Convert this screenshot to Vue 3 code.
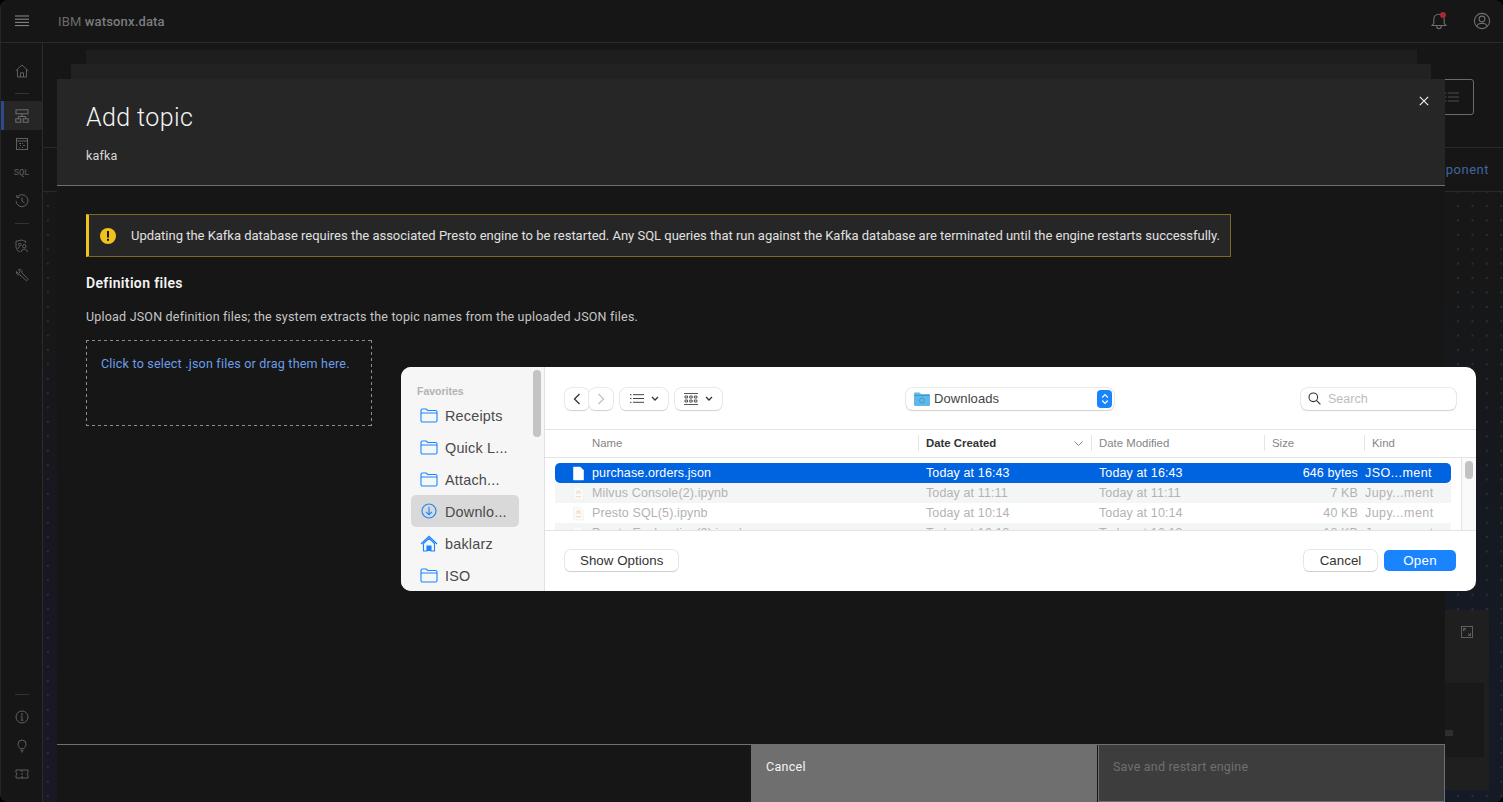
<script setup>
const favorites = [
  { label: 'Receipts', icon: 'folder' },
  { label: 'Quick L...', icon: 'folder' },
  { label: 'Attach...', icon: 'folder' },
  { label: 'Downlo...', icon: 'download', active: true },
  { label: 'baklarz', icon: 'home' },
  { label: 'ISO', icon: 'folder' }
]
const rows = [
  { name: 'purchase.orders.json', created: 'Today at 16:43', modified: 'Today at 16:43', size: '646 bytes', kind: 'JSO...ment', cls: 'selected' },
  { name: 'Milvus Console(2).ipynb', created: 'Today at 11:11', modified: 'Today at 11:11', size: '7 KB', kind: 'Jupy...ment', cls: 'striped' },
  { name: 'Presto SQL(5).ipynb', created: 'Today at 10:14', modified: 'Today at 10:14', size: '40 KB', kind: 'Jupy...ment', cls: '' },
  { name: 'Presto Exploration(2).ipynb', created: 'Today at 10:13', modified: 'Today at 10:13', size: '18 KB', kind: 'Jupy...ment', cls: 'striped' }
]
</script>

<template>
  <div class="app">
    <header class="topbar">
      <svg class="burger" width="14" height="12" viewBox="0 0 14 12"><path d="M0 1h14M0 4.200h14M0 7.400h14M0 10.600h14" stroke="#8d8d8d" fill="none" /></svg>
      <span class="brand">IBM <b>watsonx.data</b></span>
      <span class="spacer"></span>
      <span class="bell">
        <svg width="20" height="20" viewBox="0 0 20 20" fill="none" stroke="#6f6f6f" stroke-width="1.100"><path d="M3 14.500l1.800-2V8.400C4.800 5.400 7 3.200 10 3.200s5.200 2.200 5.200 5.200v4.100l1.800 2z" /><path d="M7.800 14.500v1c0 1.200 1 2.100 2.200 2.100s2.200-.9 2.200-2.100v-1" /></svg>
        <i></i>
      </span>
      <svg class="user" width="18" height="18" viewBox="0 0 18 18" fill="none" stroke="#6f6f6f" stroke-width="1.100"><circle cx="9" cy="9" r="7.600" /><circle cx="9" cy="7" r="2.900" /><path d="M4 14.200c.6-1.800 2-2.700 3.400-2.700h3.200c1.400 0 2.800.9 3.400 2.700" /></svg>
    </header>

    <div class="shell">
      <nav class="sidenav">
        <div class="navitem">
          <svg width="14" height="14" viewBox="0 0 14 14" fill="none" stroke="#5f5f5f"><path d="M.8 6.800L7 1l6.200 5.800M2.500 5.500v7.500h9V5.500M5.500 13V8.800h3V13" /></svg>
        </div>
        <div class="rule"></div>
        <div class="navitem current">
          <svg width="14" height="14" viewBox="0 0 14 14" fill="none" stroke="#6f6f6f"><rect x="1" y=".8" width="12" height="4" /><rect x=".8" y="9.800" width="5" height="3.400" /><rect x="8.200" y="9.800" width="5" height="3.400" /><path d="M7 4.800v2.700M3.300 9.800V7.500h7.400v2.300" /></svg>
        </div>
        <div class="navitem tight">
          <svg width="14" height="14" viewBox="0 0 14 14" fill="none" stroke="#5f5f5f"><rect x="1.500" y="1.500" width="11" height="11" /><path d="M1.500 4h11M4 6.500h2M7 6.500h1M5 8.500h1M8 8.500h2M4 10.500h1M7 10.500h1" /></svg>
        </div>
        <div class="navitem sql">SQL</div>
        <div class="navitem tight">
          <svg width="14" height="14" viewBox="0 0 14 14" fill="none" stroke="#5f5f5f"><path d="M2.100 3.200A6 6 0 1 1 1 7M1.800 1v2.500h2.600M7 3.500V7l2.500 2" /></svg>
        </div>
        <div class="rule second"></div>
        <div class="navitem">
          <svg width="14" height="14" viewBox="0 0 14 14" fill="none" stroke="#5f5f5f"><path d="M5 13C2.500 12 1 10 1 7.500V2.200C3 2 5 1.500 6.500 1c1.200.5 2.500.9 4 1.100v2" /><circle cx="4.800" cy="5.600" r="1.300" /><path d="M3 10c0-1.300.8-2 1.800-2" /><circle cx="9.300" cy="7.200" r="1.700" /><path d="M6.300 13c0-1.800 1.200-2.800 3-2.800s3 1 3 2.800" /></svg>
        </div>
        <div class="navitem">
          <svg width="14" height="14" viewBox="0 0 14 14" fill="none" stroke="#5f5f5f"><path d="M1.500 3.500L3.500 5.500 5.300 4 3.400 1.700C5 .8 6.700 1.600 7 3.300c.1.700 0 1.200-.1 1.500l5.500 5.500c.6.600.6 1.300.1 1.800-.6.600-1.300.5-1.800 0L5 6.800c-2 .7-4.200-1.200-3.500-3.300z" /></svg>
        </div>
        <span class="spacer"></span>
        <div class="rule bottom"></div>
        <div class="navitem">
          <svg width="14" height="14" viewBox="0 0 14 14" fill="none" stroke="#5f5f5f"><circle cx="7" cy="7" r="6" /><path d="M5.500 10.200h3M7 10V6.300H5.800" /><circle cx="7" cy="4.200" r=".5" fill="#5f5f5f" /></svg>
        </div>
        <div class="navitem">
          <svg width="14" height="14" viewBox="0 0 14 14" fill="none" stroke="#5f5f5f"><path d="M5.200 9.700C4.800 8.500 3 7.600 3 5a4 4 0 0 1 8 0c0 2.600-1.800 3.500-2.200 4.700zM5.500 11.200h3M6 12.800h2" /></svg>
        </div>
        <div class="navitem tight">
          <svg width="14" height="14" viewBox="0 0 14 14" fill="none" stroke="#5f5f5f"><path d="M1 3h12v2.400c-1 .3-1 2.900 0 3.200V11H1V8.600c1-.3 1-2.900 0-3.200zM7 3v2M7 6v2M7 9v2" /></svg>
        </div>
      </nav>

      <main class="stage">
        <div class="pagehead">
          <div class="ghostbtn">
            <svg width="14" height="10" viewBox="0 0 14 10" fill="none" stroke="#4c4c4c"><path d="M0 1h1.500M3 1h11M0 5h1.500M3 5h11M0 9h1.500M3 9h11" /></svg>
          </div>
        </div>
        <div class="tabs"><span class="addlink">Add component</span></div>
        <div class="lowercard">
          <svg class="expand" width="12" height="12" viewBox="0 0 12 12" fill="none" stroke="#5f5f5f"><rect x=".5" y=".5" width="11" height="11" /><path d="M2.500 5V2.500H5M9.500 7v2.500H7M2.700 2.700l2 2M9.300 9.300l-2-2" /></svg>
          <div class="innercard"><i></i></div>
        </div>

        <div class="layer one"></div>
        <div class="layer two"></div>
        <section class="modal">
          <div class="modalhead">
            <h1>Add topic</h1>
            <p>kafka</p>
            <svg class="close" width="10" height="10" viewBox="0 0 10 10" stroke="#f4f4f4" stroke-width="1.100"><path d="M.8.800l8.400 8.400M9.200.800L.8 9.200" /></svg>
          </div>
          <div class="modalbody">
            <div class="notice">
              <svg width="18" height="18" viewBox="0 0 18 18"><circle cx="9" cy="9" r="8" fill="#f1c21b" /><rect x="8" y="4" width="2" height="6.500" fill="#161616" /><rect x="8" y="11.800" width="2" height="2" fill="#161616" /></svg>
              <span>Updating the Kafka database requires the associated Presto engine to be restarted. Any SQL queries that run against the Kafka database are terminated until the engine restarts successfully.</span>
            </div>
            <h2>Definition files</h2>
            <p class="hint">Upload JSON definition files; the system extracts the topic names from the uploaded JSON files.</p>
            <div class="drop">Click to select .json files or drag them here.</div>
          </div>
          <footer class="modalfoot">
            <span class="spacer"></span>
            <div class="fbtn cancel">Cancel</div>
            <div class="fbtn save">Save and restart engine</div>
          </footer>
        </section>
      </main>
    </div>

    <div class="dialog">
      <aside class="favs">
        <div class="favtitle">Favorites</div>
        <div v-for="f in favorites" :key="f.label" class="fav" :class="{ active: f.active }">
          <svg v-if="f.icon === 'folder'" width="18" height="15" viewBox="0 0 18 15" fill="none" stroke="#1a84ff" stroke-width="1.100"><path d="M1 3V2.500C1 1.700 1.600 1 2.500 1h3.700l1.400 1.500h8c.8 0 1.400.6 1.400 1.400v8.600c0 .8-.6 1.500-1.400 1.500h-13C1.600 14 1 13.300 1 12.500zM1 5h16" /></svg>
          <svg v-else-if="f.icon === 'download'" width="18" height="18" viewBox="0 0 18 18" fill="none" stroke="#1a84ff" stroke-width="1.100"><circle cx="9" cy="9" r="7" /><path d="M9 4.800v7.800M6 9.800l3 3 3-3" /></svg>
          <svg v-else width="18" height="17" viewBox="0 0 18 17"><path d="M1 9L9 1.500 17 9" fill="none" stroke="#1a84ff" stroke-width="1.300" /><path d="M3.500 8.500L9 3.400l5.500 5.100V16H11v-5H7v5H3.500z" fill="none" stroke="#1a84ff" stroke-width="1.100" /><rect x="7" y="11" width="4" height="5" fill="#1a84ff" /></svg>
          <span>{{ f.label }}</span>
        </div>
        <div class="favscroll"></div>
      </aside>
      <div class="browser">
        <div class="toolbar">
          <div class="navpair">
            <span class="tbtn">
              <svg width="8" height="12" viewBox="0 0 8 12" fill="none" stroke="#333" stroke-width="1.300"><path d="M6.500 1L1.500 6l5 5" /></svg>
            </span>
            <span class="tbtn">
              <svg width="8" height="12" viewBox="0 0 8 12" fill="none" stroke="#c2c2c2" stroke-width="1.300"><path d="M1.500 1l5 5-5 5" /></svg>
            </span>
          </div>
          <span class="tbtn view list">
            <svg width="14" height="9" viewBox="0 0 14 9" fill="none" stroke="#444"><path d="M0 .7h1.500M3 .7h11M0 4.500h1.500M3 4.500h11M0 8.300h1.500M3 8.300h11" /></svg>
            <svg width="8" height="5" viewBox="0 0 8 5" fill="none" stroke="#333" stroke-width="1.300"><path d="M1 1l3 3 3-3" /></svg>
          </span>
          <span class="tbtn view grid">
            <svg width="14" height="12" viewBox="0 0 14 12" fill="none" stroke="#444" stroke-width=".9"><path d="M0 .5h14M0 11.500h14" /><path d="M1 3h2.500v2H1zM5.700 3h2.500v2H5.700zM10.400 3h2.500v2h-2.500zM1 7h2.500v2H1zM5.700 7h2.500v2H5.700zM10.400 7h2.500v2h-2.500z" /></svg>
            <svg width="8" height="5" viewBox="0 0 8 5" fill="none" stroke="#333" stroke-width="1.300"><path d="M1 1l3 3 3-3" /></svg>
          </span>
          <div class="location">
            <svg width="16" height="14" viewBox="0 0 16 14"><path d="M0 2c0-.8.600-1.500 1.400-1.500h4L7 2h7.500c.8 0 1.500.6 1.500 1.400V12.500c0 .8-.7 1.500-1.500 1.500h-13C.6 14 0 13.300 0 12.500z" fill="#5eb8e8" /><path d="M0 3.500h16" stroke="#3f9ad0" /><circle cx="8" cy="8.500" r="2.500" fill="none" stroke="#3f9ad0" /></svg>
            <span>Downloads</span>
            <b class="stepper">
              <svg width="8" height="12" viewBox="0 0 8 12" fill="none" stroke="#fff" stroke-width="1.200"><path d="M1.200 4.500L4 1.700l2.800 2.800M1.200 7.500L4 10.300l2.800-2.800" /></svg>
            </b>
          </div>
          <div class="search">
            <svg width="13" height="13" viewBox="0 0 13 13" fill="none" stroke="#333" stroke-width="1.100"><circle cx="5.300" cy="5.300" r="4.300" /><path d="M8.400 8.400l4 4" /></svg>
            <span>Search</span>
          </div>
        </div>

        <div class="colhead">
          <span class="c-name">Name</span>
          <span class="c-created">Date Created
            <svg width="9" height="5" viewBox="0 0 9 5" fill="none" stroke="#8a8a8a"><path d="M.5.500l4 4 4-4" /></svg>
          </span>
          <span class="c-mod">Date Modified</span>
          <span class="c-size">Size</span>
          <span class="c-kind">Kind</span>
        </div>

        <div class="listing">
          <div class="rows">
            <div v-for="r in rows" :key="r.name" class="row" :class="r.cls">
              <svg class="fileicon" width="11" height="15" viewBox="0 0 12 15">
                <path d="M.5.500h7.500l3.500 3.500v10.500H.5z" :fill="r.cls === 'selected' ? '#fff' : '#fbfbfb'" :stroke="r.cls === 'selected' ? '#fff' : '#ececec'" stroke-width=".6" />
                <path v-if="r.cls !== 'selected'" d="M3.500 5h5M3 7.500c1.500-1 4.500-1 6 0M3 10.500c1.500 1 4.500 1 6 0" stroke="#f3c5a0" fill="none" stroke-width=".8" />
              </svg>
              <span class="r-name">{{ r.name }}</span>
              <span class="r-created">{{ r.created }}</span>
              <span class="r-mod">{{ r.modified }}</span>
              <span class="r-size">{{ r.size }}</span>
              <span class="r-kind">{{ r.kind }}</span>
            </div>
          </div>
          <div class="vscroll"><i></i></div>
        </div>

        <div class="dfoot">
          <span class="mbtn">Show Options</span>
          <span class="spacer"></span>
          <span class="mbtn wide">Cancel</span>
          <span class="mbtn primary">Open</span>
        </div>
      </div>
    </div>
  </div>
</template>

<style>
html, body { margin: 0; background: #000; overflow: hidden; }
</style>

<style scoped>
* { box-sizing: border-box; }
.app {
  position: relative;
  width: 1503px;
  height: 802px;
  display: flex;
  flex-direction: column;
  background: #161616;
  border-left: 1px solid #262626;
  border-radius: 8px;
  overflow: hidden;
  font-family: Roboto, "Noto Sans", sans-serif;
  color: #f4f4f4;
}
.spacer { flex: 1; }
.topbar {
  height: 43px;
  flex: none;
  display: flex;
  align-items: center;
  background: #161616;
  border-bottom: 1px solid #2b2b2b;
}
.burger { margin-left: 14px; }
.brand { margin-left: 29px; font-size: 13px; letter-spacing: .15px; color: #6b6b6b; }
.brand b { font-weight: 500; color: #7d7d7d; }
.bell { position: relative; width: 20px; height: 20px; margin-right: 24px; }
.bell i { position: absolute; left: 11px; top: 1px; width: 6px; height: 6px; border-radius: 50%; background: #a52a33; }
.user { margin-right: 12px; }
.shell { flex: 1; display: flex; min-height: 0; }
.sidenav {
  width: 42px;
  flex: none;
  display: flex;
  flex-direction: column;
  align-items: stretch;
  background: #161616;
  border-right: 1px solid #2b2b2b;
  padding: 13px 0 14px;
}
.navitem { height: 29px; flex: none; display: flex; align-items: center; justify-content: center; }
.navitem.tight { height: 28px; }
.navitem.current { background: #262626; border-left: 3px solid #2c4a8c; padding-right: 3px; }
.rule { height: 1px; width: 14px; flex: none; background: #333; margin: 8px auto 7px; }
.rule.second { margin: 8px auto 7px; }
.rule.bottom { margin: 0 auto 7px; }
.sql { font-size: 9px; color: #5f5f5f; font-family: "Liberation Mono", monospace; letter-spacing: -.3px; }
.stage {
  position: relative;
  flex: 1;
  display: flex;
  flex-direction: column;
  min-width: 0;
  background-color: #171717;
  background-image:
    radial-gradient(circle at 5px 5px, #2c2e38 1px, transparent 1.200px),
    linear-gradient(180deg, #171717 30%, #1a1726 85%),
    linear-gradient(180deg, #171717 28%, #141a26 85%);
  background-size: 14.400px 14.400px, 14px 100%, 100% 100%;
  background-repeat: repeat, no-repeat, no-repeat;
}
.pagehead { height: 105px; flex: none; display: flex; justify-content: flex-end; align-items: flex-start; padding: 36px 29px 0 0; background: #161616; border-bottom: 1px solid #2a2a2a; }
.ghostbtn { width: 120px; height: 36px; border: 1px solid #6b6b6b; border-radius: 3px; display: flex; align-items: center; justify-content: flex-end; padding-right: 14px; }
.tabs { height: 44px; flex: none; display: flex; align-items: center; justify-content: flex-end; padding-right: 14px; background: #161616; border-bottom: 1px solid #2a2a2a; }
.addlink { font-size: 13px; letter-spacing: .5px; color: #41659f; }
.lowercard { position: relative; width: 600px; height: 180px; margin: 418px 14px 0 auto; background: #1f1f1f; }
.expand { position: absolute; right: 16px; top: 16px; }
.innercard { position: absolute; left: 0; right: 5px; top: 73px; height: 74px; background: #191919; }
.innercard i { position: absolute; right: 31px; top: 47px; width: 8px; height: 6px; background: #2e2e2e; }
.layer { position: absolute; }
.layer.one { left: 43px; right: 86px; top: 7px; height: 40px; background: #1e1e1e; }
.layer.two { left: 28px; right: 72px; top: 21px; height: 40px; background: #222; }
.modal { position: absolute; left: 14px; right: 58px; top: 36px; bottom: 0; display: flex; flex-direction: column; background: #161616; }
.modalhead { position: relative; height: 107px; flex: none; background: #262626; border-bottom: 1px solid #6f6f6f; padding: 23px 29px 0; }
h1 { margin: 0; font-size: 25px; line-height: 32px; font-weight: 300; letter-spacing: .4px; color: #f4f4f4; }
.modalhead p { margin: 14px 0 0; font-size: 12.500px; line-height: 16px; letter-spacing: .2px; color: #d6d6d6; }
.close { position: absolute; right: 16px; top: 17px; }
.modalbody { flex: 1; padding: 28px 29px 0; }
.notice { width: 1145px; height: 43px; display: flex; align-items: center; gap: 14px; padding-left: 10px; background: #262626; border: 1px solid #7b6a22; border-left: 3px solid #f1c21b; font-size: 13px; letter-spacing: -.012px; color: #e0e0e0; white-space: nowrap; }
h2 { margin: 17px 0 0; font-size: 14px; line-height: 18px; font-weight: 600; letter-spacing: .35px; color: #f4f4f4; }
.hint { margin: 17px 0 0; font-size: 12.500px; line-height: 16px; letter-spacing: .2px; color: #c6c6c6; }
.drop {
  width: 286px;
  height: 86px;
  margin-top: 15px;
  padding: 16px 15px;
  font-size: 12.500px;
  line-height: 16px;
  letter-spacing: .21px;
  color: #6d9ee8;
  background-image:
    linear-gradient(90deg, #8d8d8d 3px, transparent 3px),
    linear-gradient(90deg, #8d8d8d 3px, transparent 3px),
    linear-gradient(180deg, #8d8d8d 3px, transparent 3px),
    linear-gradient(180deg, #8d8d8d 3px, transparent 3px);
  background-size: 6px 1px, 6px 1px, 1px 6px, 1px 6px;
  background-position: 0 0, 0 100%, 0 0, 100% 0;
  background-repeat: repeat-x, repeat-x, repeat-y, repeat-y;
}
.modalfoot { height: 58px; flex: none; display: flex; border-top: 1px solid #6f6f6f; }
.fbtn { padding: 14px 15px; font-size: 12.500px; letter-spacing: .3px; line-height: 16px; }
.fbtn.cancel { width: 346px; background: #6f6f6f; color: #f4f4f4; margin-right: 1px; }
.fbtn.save { width: 347px; padding-left: 14px; letter-spacing: .2px; background: #3d3d3d; border: 1px solid #6f6f6f; border-top: 0; color: #6f6f6f; }

.dialog { position: absolute; left: 400px; top: 367px; width: 1075px; height: 224px; display: flex; background: #fff; border-radius: 10px; overflow: hidden; font-family: "Liberation Sans", sans-serif; color: #333; }
.favs { position: relative; width: 144px; flex: none; background: #f6f6f6; border-right: 1px solid #e2e2e2; padding: 18px 10px 0; }
.favtitle { font-size: 10.500px; line-height: 12px; font-weight: 700; color: #b3b3b3; padding-left: 6px; margin-bottom: 2px; }
.fav { height: 32px; display: flex; align-items: center; gap: 7px; padding-left: 9px; border-radius: 5px; font-size: 14.400px; color: #4a4a4a; letter-spacing: .2px; width: 108px; white-space: nowrap; }
.fav svg { flex: none; }
.fav span { padding-top: 2px; }
.fav.active { background: #d9d9d9; }
.favscroll { position: absolute; left: 132px; top: 3px; width: 8px; height: 67px; border-radius: 4px; background: #c4c4c4; }
.browser { flex: 1; display: flex; flex-direction: column; min-width: 0; }
.toolbar { height: 63px; flex: none; display: flex; align-items: center; padding: 1px 20px 0 20px; border-bottom: 1px solid #e4e4e4; }
.navpair { display: flex; }
.tbtn { height: 22px; width: 24px; display: flex; align-items: center; justify-content: center; background: #fff; border-radius: 6px; box-shadow: 0 0 0 .5px #d6d6d6, 0 1px 1px #d0d0d0; }
.view { gap: 7px; margin-left: 7px; }
.view.list { width: 48px; }
.view.grid { width: 47px; }
.location { width: 208px; height: 22px; margin-left: 184px; display: flex; align-items: center; gap: 4px; padding-left: 8px; border-radius: 6px; box-shadow: 0 0 0 .5px #d6d6d6, 0 1px 1px #d0d0d0; font-size: 13px; letter-spacing: .1px; color: #444; }
.location span { flex: 1; }
.stepper { width: 15px; height: 18px; margin-right: 2px; display: flex; align-items: center; justify-content: center; border-radius: 4px; background: #1a84ff; }
.search { width: 155px; height: 22px; margin-left: auto; display: flex; align-items: center; gap: 7px; padding-left: 7px; border-radius: 6px; box-shadow: 0 0 0 .5px #d6d6d6, 0 1px 1px #d0d0d0; font-size: 12.500px; color: #bdbdbd; }
.colhead { height: 28px; flex: none; padding-bottom: 1px; border-bottom: 1px solid #e4e4e4; font-size: 11.400px; color: #858585; display: grid; grid-template-columns: 373px 173px 173px 100px 1fr; align-items: center; }
.colhead span { height: 16px; line-height: 16px; padding-left: 7px; border-left: 1px solid #e4e4e4; display: flex; align-items: center; justify-content: space-between; }
.colhead .c-name { border-left: 0; padding-left: 47px; }
.colhead .c-created { font-weight: 700; color: #333; padding-right: 8px; }
.listing { height: 73px; flex: none; display: flex; border-bottom: 1px solid #e4e4e4; overflow: hidden; }
.rows { flex: 1; padding: 5px 10px 0; min-width: 0; }
.row { height: 20px; display: grid; grid-template-columns: 19px 334px 173px 155px 104px 1fr; align-items: center; padding-left: 18px; font-size: 12.500px; letter-spacing: .12px; color: #b3b3b3; }
.row.striped { background: #f4f5f5; }
.row.selected { background: #0064e1; color: #fff; border-radius: 5px; }
.r-size { text-align: right; }
.r-kind { padding-left: 7px; white-space: nowrap; letter-spacing: .45px; }
.vscroll { width: 15px; flex: none; background: #fafafa; border-left: 1px solid #e4e4e4; position: relative; }
.vscroll i { position: absolute; left: 3px; top: 3px; width: 8px; height: 18px; border-radius: 4px; background: #c2c2c2; }
.dfoot { flex: 1; display: flex; align-items: center; gap: 7px; padding: 0 20px 1px 20px; }
.mbtn { height: 21px; padding: 0 15px; display: flex; align-items: center; justify-content: center; border-radius: 5px; background: #fff; box-shadow: 0 0 0 .5px #d0d0d0, 0 1px 1px #cfcfcf; font-size: 13.300px; letter-spacing: .05px; color: #333; }
.mbtn.wide { width: 73px; }
.mbtn.primary { width: 72px; background: #1a84ff; color: #fff; box-shadow: none; font-weight: 400; letter-spacing: .3px; }
</style>
